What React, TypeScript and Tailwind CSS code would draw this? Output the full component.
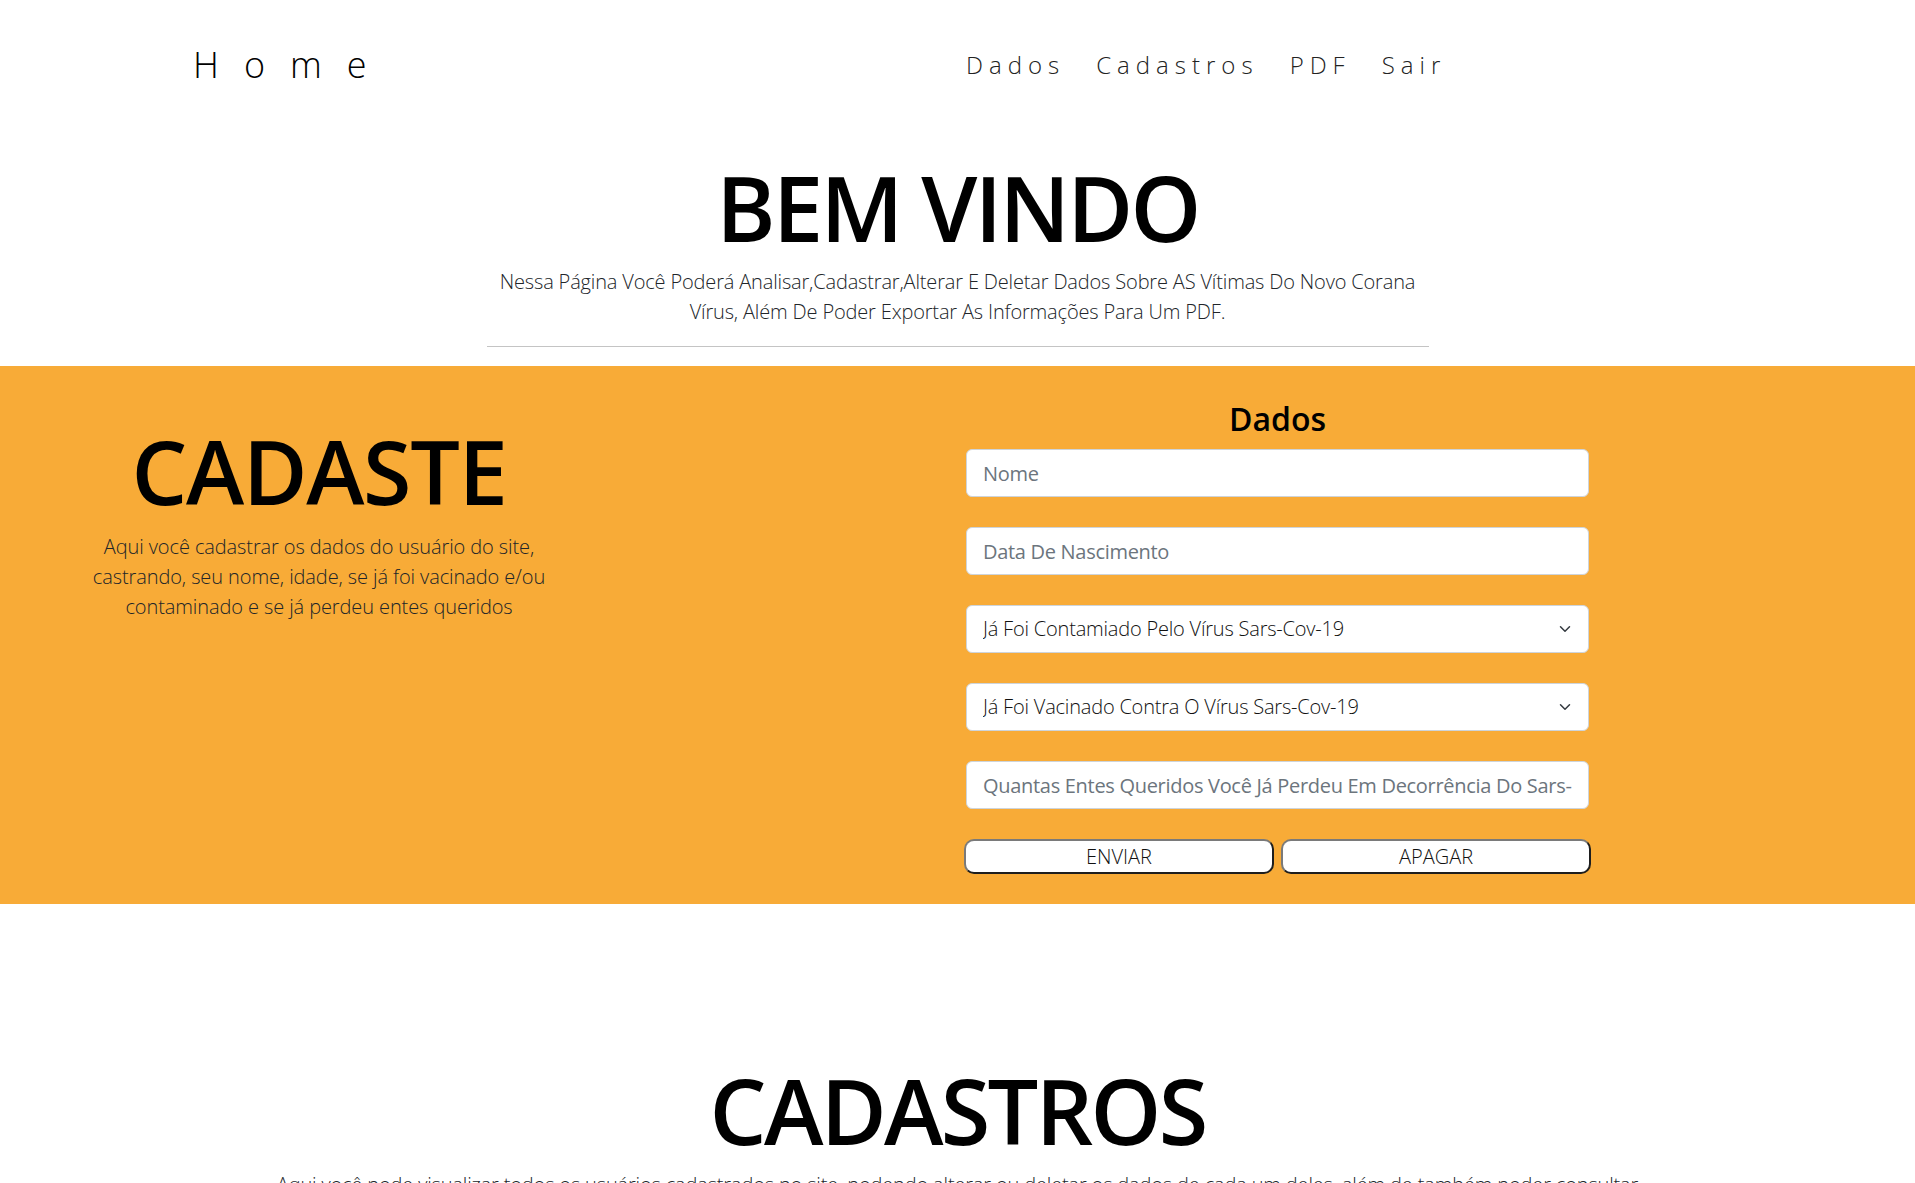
import React from "react"

const navLinks = ["Dados", "Cadastros", "PDF", "Sair"]

function Chevron() {
  return (
    <svg
      className="pointer-events-none absolute right-4 top-1/2 -translate-y-1/2"
      width="16"
      height="12"
      viewBox="0 0 16 16"
      fill="none"
      stroke="#343a40"
      strokeWidth="2"
      strokeLinecap="round"
      strokeLinejoin="round"
    >
      <path d="m2 5 6 6 6-6" />
    </svg>
  )
}

function TextField({ placeholder }: { placeholder: string }) {
  return (
    <input
      placeholder={placeholder}
      className="h-[48px] w-full rounded-[6px] border border-[#ced4da] bg-white px-4 text-[20px] tracking-[-0.3px] text-[#212529] outline-none placeholder:text-[#6c757d]"
    />
  )
}

function SelectField({ label }: { label: string }) {
  return (
    <div className="relative">
      <select className="h-[48px] w-full appearance-none rounded-[6px] border border-[#ced4da] bg-white pl-4 pr-12 text-[20px] font-light tracking-[-0.2px] text-[#111] outline-none">
        <option>{label}</option>
        <option>Sim</option>
        <option>Não</option>
      </select>
      <Chevron />
    </div>
  )
}

function FormButton({ children }: { children: React.ReactNode }) {
  return (
    <button className="h-[35px] w-[310px] rounded-[10px] border-2 border-t-[#7a7a7a] border-l-[#7a7a7a] border-r-[#1e1e1e] border-b-[#1e1e1e] bg-white text-[20px] font-light uppercase text-[#111]">
      {children}
    </button>
  )
}

export default function App() {
  return (
    <div className="min-h-screen bg-white font-['Open_Sans','Noto_Sans',sans-serif] text-black">
      {/* navbar */}
      <nav className="flex h-[130px] items-center pl-[193px]">
        <div className="w-[773px]">
          <a className="text-[36px] font-light tracking-[25px] text-black">Home</a>
        </div>
        <div className="flex gap-[31px]">
          {navLinks.map(link => (
            <a key={link} className="text-[24px] font-light tracking-[6px] text-[#222]">
              {link}
            </a>
          ))}
        </div>
      </nav>

      {/* welcome */}
      <section className="flex flex-col items-center pt-[20px]">
        <h1 className="h-[115px] text-[90px] font-semibold leading-[115px] tracking-[-0.03em]">BEM VINDO</h1>
        <p className="mt-[2px] whitespace-nowrap text-center text-[20px] font-light leading-[30px] tracking-[-0.16px] text-[#212529]">
          Nessa Página Você Poderá Analisar,Cadastrar,Alterar E Deletar Dados Sobre AS Vítimas Do Novo Corana
          <br />
          Vírus, Além De Poder Exportar As Informações Para Um PDF.
        </p>
        <hr className="mt-[19px] w-[942px] border-t border-[#c4c4c4]" />
      </section>

      {/* cadastro */}
      <section className="mt-[19px] flex h-[538px] bg-[#f8ab37]">
        <div className="w-[638px] pt-[53px] text-center">
          <h1 className="text-[88px] font-semibold leading-[1.2] tracking-[-0.014em]">CADASTE</h1>
          <p className="mt-[7px] text-[20px] font-light leading-[30px] tracking-[-0.1px] text-[#212529]">
            Aqui você cadastrar os dados do usuário do site,
            <br />
            castrando, seu nome, idade, se já foi vacinado e/ou
            <br />
            contaminado e se já perdeu entes queridos
          </p>
        </div>
        <div className="ml-[328px] w-[623px] pt-[34px]">
          <h2 className="mb-[11px] text-center text-[32px] font-semibold leading-[38px]">Dados</h2>
          <form className="flex flex-col gap-[30px]" onSubmit={e => e.preventDefault()}>
            <TextField placeholder="Nome" />
            <TextField placeholder="Data De Nascimento" />
            <SelectField label="Já Foi Contamiado Pelo Vírus Sars-Cov-19" />
            <SelectField label="Já Foi Vacinado Contra O Vírus Sars-Cov-19" />
            <TextField placeholder="Quantas Entes Queridos Você Já Perdeu Em Decorrência Do Sars-Cov-19" />
            <div className="-mx-[2px] flex gap-[7px]">
              <FormButton>Enviar</FormButton>
              <FormButton>Apagar</FormButton>
            </div>
          </form>
        </div>
      </section>

      {/* cadastros */}
      <section className="flex flex-col items-center pb-[80px] pt-[149px]">
        <h1 className="h-[115px] text-[90px] font-semibold leading-[115px] tracking-[-0.03em]">CADASTROS</h1>
        <p className="mt-[2px] whitespace-nowrap text-center text-[20px] font-light leading-[30px] tracking-[-0.16px] text-[#212529]">
          Aqui você pode visualizar todos os usuários cadastrados no site, podendo alterar ou deletar os dados de cada um deles, além de também poder consultar
          <br />
          e exportar todas as informações para um PDF.
        </p>
      </section>
    </div>
  )
}
